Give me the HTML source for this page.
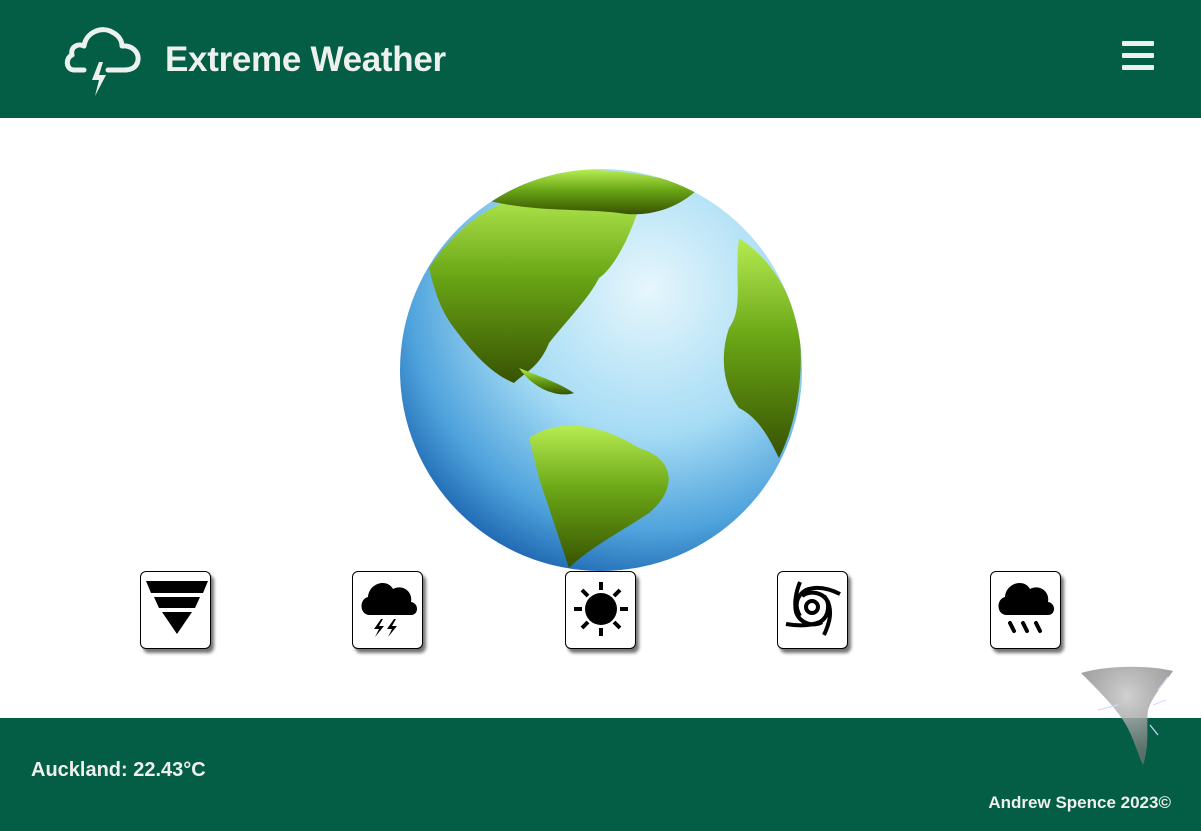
<!DOCTYPE html>
<html><head><meta charset="utf-8"><style>
*{margin:0;padding:0;box-sizing:border-box}
body{width:1201px;height:831px;position:relative;background:#fff;font-family:"Liberation Sans",sans-serif;overflow:hidden}
header{position:absolute;left:0;top:0;width:1201px;height:118px;background:#035e45}
header h1{position:absolute;left:165px;top:40px;color:#eef0ee;font-size:35px;font-weight:bold;letter-spacing:-0.3px}
.burger{position:absolute;left:1122px;top:41px;width:32px}
.burger i{display:block;height:5px;background:#eef0ee;margin-bottom:7px;border-radius:1px}
footer{position:absolute;left:0;top:718px;width:1201px;height:113px;background:#035e45;color:#eef0ee;font-weight:bold}
.city{position:absolute;left:31px;top:41px;font-size:20px}
.copy{position:absolute;right:30px;top:75px;font-size:17px}
.box{position:absolute;top:571px;width:71px;height:78px;border:1.5px solid #000;border-radius:6px;background:#fff;box-shadow:3px 4px 3px rgba(0,0,0,.55)}
.box svg{position:absolute;left:0;top:0}
</style></head><body>
<header>
<svg style="position:absolute;left:62px;top:20px" width="80" height="78" viewBox="0 0 80 78">
<path d="M22 50 H12 C4 50 3 38 10 35 C8 27 16 23 22 26 C24 12 40 6 50 12 C58 16 60 22 60 26 C70 25 77 32 76 40 C75 47 70 50 62 50 H46" fill="none" stroke="#eef0ee" stroke-width="5" stroke-linecap="round" stroke-linejoin="round"/>
<path d="M37 42 L30 60 L37 60 L33 76 L44 55 L37 55 L41 42Z" fill="#eef0ee"/>
</svg>
<h1>Extreme Weather</h1>
<div class="burger"><i></i><i></i><i></i></div>
</header>
<svg style="position:absolute;left:399px;top:168px" width="404" height="404" viewBox="0 0 404 404">
<defs>
<radialGradient id="oc" cx="0.62" cy="0.3" r="0.8"><stop offset="0" stop-color="#e6f6fc"/><stop offset="0.45" stop-color="#a6dcf5"/><stop offset="0.75" stop-color="#4fa3dc"/><stop offset="1" stop-color="#0a4fa0"/></radialGradient>
<linearGradient id="ld" x1="0" y1="0" x2="0" y2="1"><stop offset="0" stop-color="#b6ec52"/><stop offset="0.45" stop-color="#6aa616"/><stop offset="1" stop-color="#385202"/></linearGradient>
<clipPath id="c"><circle cx="202" cy="202" r="201"/></clipPath>
</defs>
<circle cx="202" cy="202" r="201" fill="url(#oc)"/>
<g clip-path="url(#c)" fill="url(#ld)">
<path d="M30 100 C50 70 80 40 120 30 C160 20 200 10 240 40 C230 70 215 100 200 110 C190 130 170 150 150 175 C140 200 125 205 115 215 C90 205 70 180 55 160 C40 140 35 120 30 100Z"/>
<path d="M80 30 C120 0 200 -10 300 20 C280 40 250 50 220 45 C180 40 130 45 80 30Z"/>
<path d="M130 270 C160 250 200 255 240 280 C275 290 280 320 250 345 C220 365 190 380 170 400 C160 370 150 340 140 310Z"/>
<path d="M340 70 C370 90 390 120 400 160 C405 200 400 250 380 290 C370 270 360 250 340 240 C325 220 320 190 330 160 C345 140 335 110 340 70Z"/>
<path d="M120 200 C140 208 160 215 175 225 C160 230 135 222 120 200Z"/>
</g>
</svg>
<div class="box" style="left:140px"><svg width="71" height="78" viewBox="0 0 71 78"><path d="M5 9H67L62 21H10Z M13 25H59L54 36H18Z M21 40H51L36 62Z" fill="#000"/></svg></div>
<div class="box" style="left:352px"><svg width="71" height="78" viewBox="0 0 71 78"><path d="M17 43 C6 43 6 27 15 25 C16 11 34 6 40 17 C49 12 60 19 58 30 C66 31 66 43 58 43Z" fill="#000"/><path d="M28 47 L21 57 H26 L22 65 L31 54 H26 L30 47Z M41 47 L34 57 H39 L35 65 L44 54 H39 L43 47Z" fill="#000"/></svg></div>
<div class="box" style="left:565px"><svg width="71" height="78" viewBox="0 0 71 78"><circle cx="35" cy="37" r="16" fill="#000"/><g stroke="#000" stroke-width="4"><path d="M35 10V18M35 56V64M8 37H16M54 37H62M16 18L22 24M48 50L54 56M54 18L48 24M22 50L16 56"/></g></svg></div>
<div class="box" style="left:777px"><svg width="71" height="78" viewBox="0 0 71 78"><circle cx="34" cy="35" r="6" fill="none" stroke="#000" stroke-width="4"/><path d="M22 10 C18 20 16 30 18 40 C22 52 36 55 44 50 M62 22 C50 16 38 14 28 18 C18 24 16 34 22 44 M46 63 C52 50 54 40 50 30 C45 20 32 18 24 24 M8 52 C20 54 32 54 42 50 C52 44 52 30 46 24" fill="none" stroke="#000" stroke-width="4"/></svg></div>
<div class="box" style="left:990px"><svg width="71" height="78" viewBox="0 0 71 78"><path d="M16 43 C5 43 5 27 14 25 C15 11 33 6 39 17 C48 12 59 19 57 30 C65 31 65 43 57 43Z" fill="#000"/><path d="M19 51L23 59M32 51L36 59M45 51L49 59" stroke="#000" stroke-width="4" stroke-linecap="round"/></svg></div>
<footer>
<div class="city">Auckland: 22.43°C</div>
<div class="copy">Andrew Spence 2023©</div>
</footer>
<svg style="position:absolute;left:1078px;top:665px;z-index:5" width="100" height="105" viewBox="0 0 100 105">
<defs><radialGradient id="t" cx="0.5" cy="0.3" r="0.6"><stop offset="0" stop-color="#ccc"/><stop offset="1" stop-color="#777" stop-opacity="0.8"/></radialGradient></defs>
<path d="M3 8 C30 0 70 0 95 6 C85 20 75 30 70 45 C68 60 72 80 65 100 C58 85 55 70 45 55 C35 40 20 25 3 8Z" fill="url(#t)" opacity="0.9"/>
<path d="M80 25 L90 12 M75 40 L88 35 M72 60 L80 70 M20 45 L40 40" stroke="#d8d8ff" stroke-width="1.2" fill="none"/>
</svg>
</body></html>
